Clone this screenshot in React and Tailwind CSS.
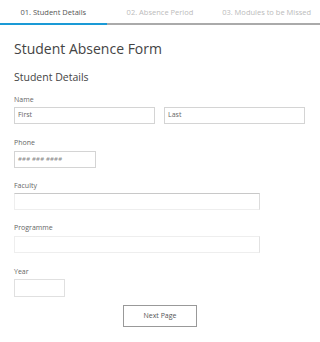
export default function App() {
  const font = { fontFamily: '"Open Sans", "Noto Sans", sans-serif' };
  return (
    <div className="w-[320px] h-[342px] bg-white overflow-hidden" style={font}>
      <div className="grid grid-cols-3 h-[25px]">
        <div className="flex items-center justify-center border-b-2 border-[#1a9ad6] text-[7.5px] text-[#555] pt-[3px]">01. Student Details</div>
        <div className="flex items-center justify-center border-b-2 border-[#aaaaaa] text-[7.5px] text-[#bbb] pt-[3px]">02. Absence Period</div>
        <div className="flex items-center justify-center border-b-2 border-[#aaaaaa] text-[7.5px] text-[#bbb] pt-[3px]">03. Modules to be Missed</div>
      </div>
      <div className="px-[14px]">
        <h1 className="text-[14px] leading-[20px] text-[#444] mt-[14px]">Student Absence Form</h1>
        <h2 className="text-[10.5px] leading-[14px] text-[#444] mt-[11px]">Student Details</h2>

        <div className="text-[7px] leading-[9px] text-[#666] mt-[11px]">Name</div>
        <div className="flex gap-[9px] mt-[3px]">
          <div className="w-[141px] h-[17px] border border-[#d4d4d4] flex items-center px-[3px] text-[7px] text-[#666]">First</div>
          <div className="w-[141px] h-[17px] border border-[#d4d4d4] flex items-center px-[3px] text-[7px] text-[#666]">Last</div>
        </div>

        <div className="text-[7px] leading-[9px] text-[#666] mt-[14px]">Phone</div>
        <div className="w-[82px] h-[17px] mt-[4px] border border-[#d4d4d4] flex items-center px-[3px] text-[6px] text-[#888] tracking-[0.2px]">### ### ####</div>

        <div className="text-[7px] leading-[9px] text-[#666] mt-[13px]">Faculty</div>
        <div className="w-[246px] h-[17px] mt-[3px] border border-[#eeeeee] border-t-[#c8c8c8] border-r-[#dcdcdc]"></div>

        <div className="text-[7px] leading-[9px] text-[#666] mt-[13px]">Programme</div>
        <div className="w-[246px] h-[17px] mt-[4px] border border-[#eeeeee] border-r-[#e2e2e2]"></div>

        <div className="text-[7px] leading-[9px] text-[#666] mt-[14px]">Year</div>
        <div className="w-[51px] h-[18px] mt-[3px] border border-[#e0e0e0]"></div>

        <div className="flex justify-center mt-[8px]">
          <div className="w-[74px] h-[22px] border border-[#999] flex items-center justify-center text-[7px] text-[#555]">Next Page</div>
        </div>
      </div>
    </div>
  );
}
